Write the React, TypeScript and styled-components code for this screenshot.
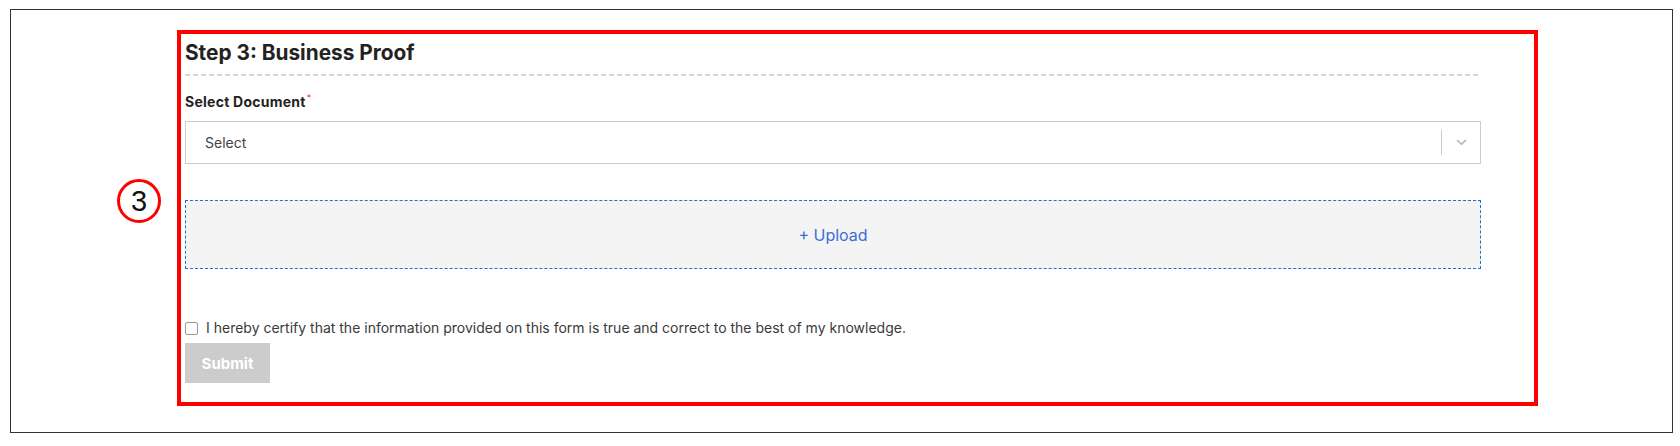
import React from "react";
import styled, { createGlobalStyle } from "styled-components";

const Global = createGlobalStyle`
  html, body { margin: 0; padding: 0; background: #fff; }
  body { font-family: Inter, "Noto Sans", sans-serif; }
  * { box-sizing: border-box; }
`;

const Frame = styled.div`
  margin: 9px 7px 0 10px;
  height: 424px;
  border: 1px solid #333;
  padding: 20px 0 0 106px;
  display: flex;
  align-items: flex-start;
`;

const StepBadge = styled.div`
  width: 44px;
  height: 44px;
  margin-top: 149px;
  border: 3px solid #f00;
  border-radius: 50%;
  display: flex;
  align-items: center;
  justify-content: center;
  font-family: "Liberation Sans", Arial, sans-serif;
  font-size: 29px;
  line-height: 1;
  color: #111;
  flex-shrink: 0;
`;

const Highlight = styled.div`
  margin-left: 16px;
  width: 1361px;
  height: 376px;
  border: 4px solid #f00;
  padding: 7px 53px 0 4px;
  display: flex;
  flex-direction: column;
`;

const Heading = styled.h2`
  margin: 0;
  font-size: 20.8px;
  line-height: 24px;
  font-weight: 700;
  color: #222;
  padding-bottom: 9px;
`;

const Divider = styled.div`
  height: 2px;
  background: repeating-linear-gradient(90deg, #d6d6d6 0 5px, transparent 5px 8px);
`;

const Label = styled.label`
  margin-top: 17px;
  font-size: 14px;
  line-height: 18px;
  font-weight: 700;
  letter-spacing: 0.25px;
  color: #222;
`;

const Required = styled.sup`
  color: #e33;
  font-size: 9px;
  font-weight: 400;
  margin-left: 1px;
  vertical-align: 6px;
  line-height: 0;
`;

const SelectBox = styled.div`
  margin-top: 10px;
  height: 43px;
  border: 1px solid #ccc;
  display: flex;
  align-items: center;
  padding-left: 19px;
  font-size: 14px;
  color: #444;
`;

const SelectValue = styled.span`
  flex: 1;
`;

const SelectSep = styled.span`
  width: 1px;
  height: 25px;
  background: #ccc;
`;

const Chevron = styled.span`
  width: 38px;
  display: flex;
  justify-content: center;
`;

const UploadZone = styled.div`
  margin-top: 36px;
  height: 69px;
  background: #f4f4f4;
  border: 1px dashed #1d6fdc;
  display: flex;
  align-items: center;
  justify-content: center;
  font-size: 16px;
  color: #3b6fd6;
`;

const CertifyRow = styled.label`
  margin-top: 50px;
  display: flex;
  align-items: center;
  gap: 8px;
  font-size: 14px;
  line-height: 18px;
  color: #3a3a3a;
`;

const Check = styled.span`
  width: 13px;
  height: 13px;
  border: 1px solid #999;
  border-radius: 2px;
  background: #fff;
  flex-shrink: 0;
`;

const SubmitButton = styled.button`
  margin-top: 6px;
  width: 85px;
  height: 40px;
  border: none;
  background: #ccc;
  color: #fff;
  font-family: Inter, sans-serif;
  font-size: 15px;
  font-weight: 700;
  padding: 0;
`;

export default function App() {
  return (
    <>
      <Global />
      <Frame>
        <StepBadge>3</StepBadge>
        <Highlight>
          <Heading>Step 3: Business Proof</Heading>
          <Divider />
          <Label>
            Select Document<Required>*</Required>
          </Label>
          <SelectBox>
            <SelectValue>Select</SelectValue>
            <SelectSep />
            <Chevron>
              <svg width="11" height="7" viewBox="0 0 11 7" fill="none">
                <path d="M1 1.2l4.5 4L10 1.2" stroke="#b8b8b8" strokeWidth="1.6" />
              </svg>
            </Chevron>
          </SelectBox>
          <UploadZone>+ Upload</UploadZone>
          <CertifyRow>
            <Check />
            I hereby certify that the information provided on this form is true and correct to the best of my knowledge.
          </CertifyRow>
          <SubmitButton>Submit</SubmitButton>
        </Highlight>
      </Frame>
    </>
  );
}
